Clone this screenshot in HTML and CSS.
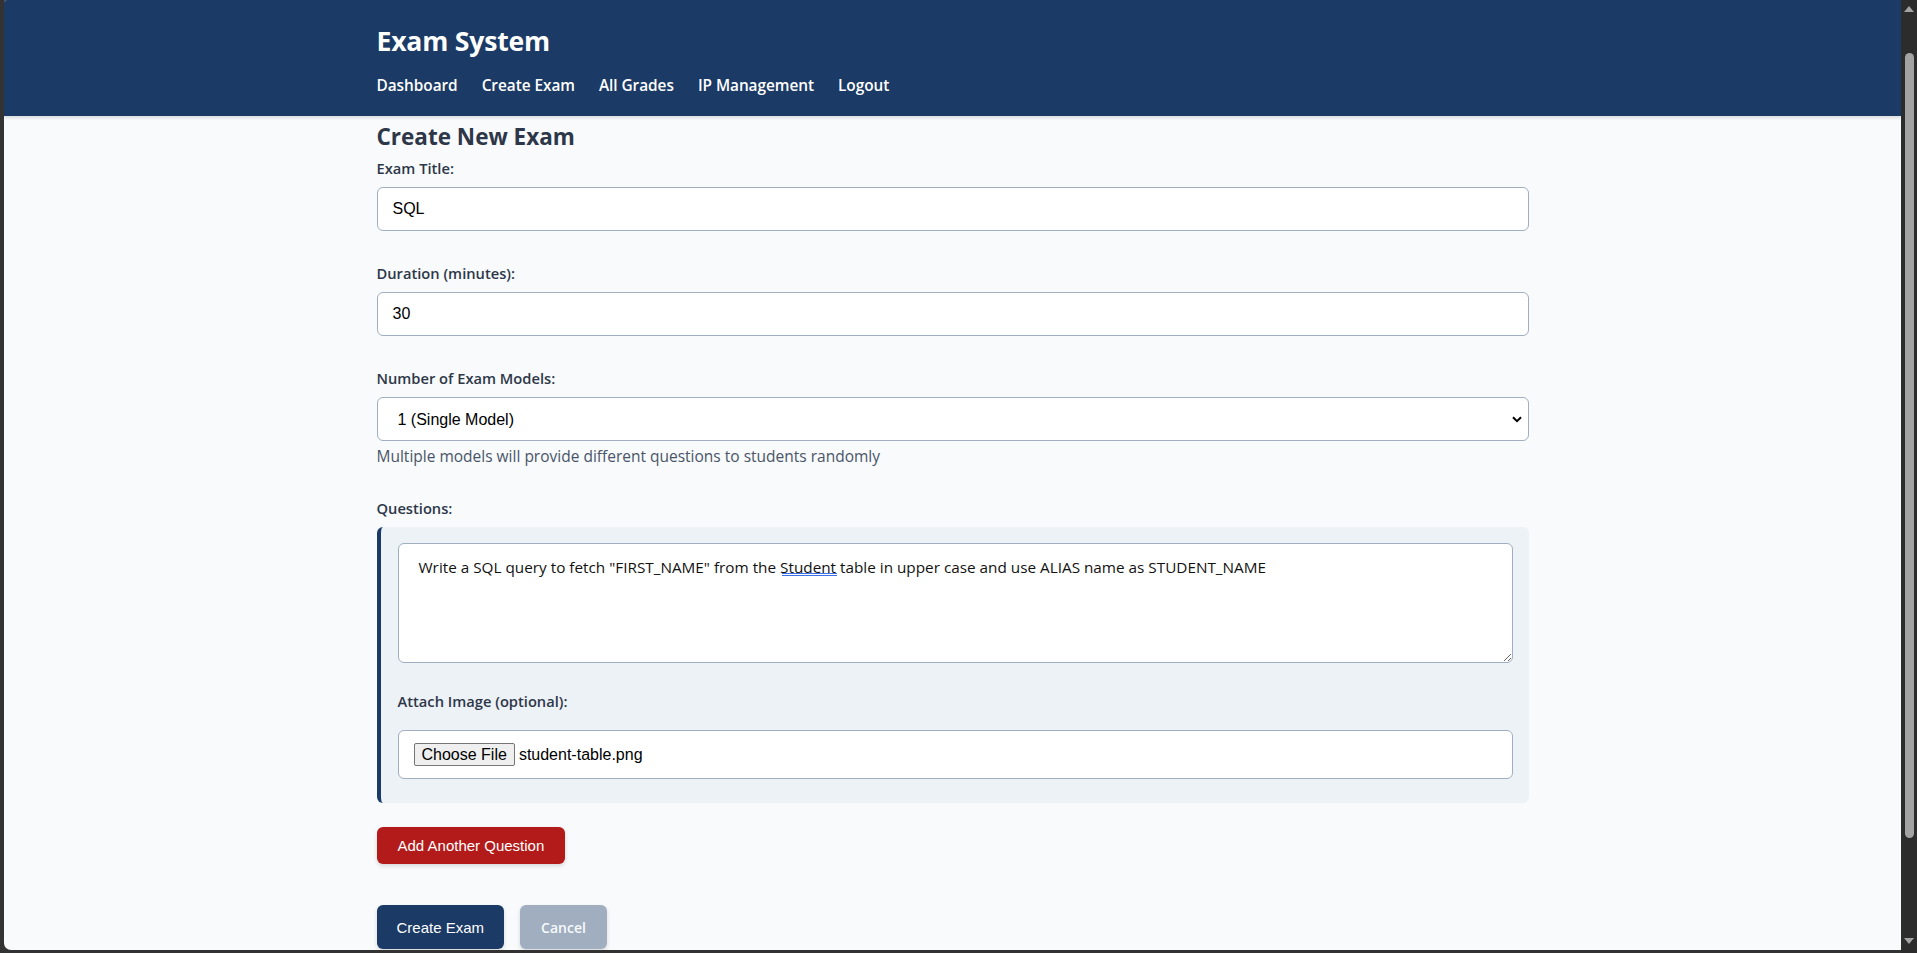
FILE: index.html
```html
<!DOCTYPE html>
<html lang="en">
<head>
<meta charset="utf-8">
<title>Create New Exam - Exam System</title>
<link rel="stylesheet" href="styles.css">
</head>
<body>
<div class="window">
  <div class="viewport">
    <header class="topbar">
      <div class="container">
        <h1 class="brand">Exam System</h1>
        <nav class="nav">
          <a href="#">Dashboard</a>
          <a href="#">Create Exam</a>
          <a href="#">All Grades</a>
          <a href="#">IP Management</a>
          <a href="#">Logout</a>
        </nav>
      </div>
    </header>
    <main class="container main">
      <h2 class="page-title">Create New Exam</h2>
      <form class="form">
        <div class="group">
          <label class="label">Exam Title:</label>
          <input class="field" type="text" value="SQL">
        </div>
        <div class="group">
          <label class="label">Duration (minutes):</label>
          <input class="field" type="text" value="30">
        </div>
        <div class="group">
          <label class="label">Number of Exam Models:</label>
          <select class="field select"><option>1 (Single Model)</option></select>
          <small class="help">Multiple models will provide different questions to students randomly</small>
        </div>
        <div class="group group-last">
          <label class="label">Questions:</label>
          <div class="question-card">
            <div class="textarea-wrap">
              <textarea class="field textarea" spellcheck="false">Write a SQL query to fetch "FIRST_NAME" from the Student table in upper case and use ALIAS name as STUDENT_NAME</textarea>
              <span class="spell-mark"></span>
            </div>
            <label class="label attach-label">Attach Image (optional):</label>
            <div class="field file-field">
              <span class="file-btn">Choose File</span>
              <span class="file-name">student-table.png</span>
            </div>
          </div>
        </div>
        <div class="add-row">
          <button type="button" class="btn btn-red">Add Another Question</button>
        </div>
        <div class="actions">
          <button type="button" class="btn btn-primary">Create Exam</button>
          <a href="#" class="btn btn-muted">Cancel</a>
        </div>
      </form>
    </main>
  </div>
  <div class="scrollbar">
    <span class="sb-up"></span>
    <span class="sb-thumb"></span>
    <span class="sb-down"></span>
  </div>
</div>
</body>
</html>
```
FILE: styles.css
```css
* { box-sizing: border-box; }

html, body {
  margin: 0;
  padding: 0;
}

body {
  height: 953px;
  overflow: hidden;
  background: #333333;
  font-family: "Open Sans", "Noto Sans", sans-serif;
  color: #2d3748;
}

.window {
  display: flex;
  align-items: flex-start;
  height: 953px;
}

.viewport {
  margin-left: 4px;
  width: 1897px;
  height: 950px;
  background: #f8fafc;
  border-bottom-left-radius: 7px;
  border-top-left-radius: 3px;
  overflow: hidden;
}

.container {
  max-width: 1200px;
  margin: 0 auto;
  padding: 0 24px;
}

/* Header */
.topbar {
  background: #1b3a65;
  color: #ffffff;
  padding: 24px 0 20px;
  box-shadow: 0 2px 3px rgba(0, 0, 0, 0.12);
  position: relative;
}

.brand {
  margin: 0;
  font-size: 26.6px;
  line-height: 34px;
  font-weight: 700;
  letter-spacing: -0.2px;
}

.nav {
  display: flex;
  gap: 24px;
  margin-top: 18px;
}

.nav a {
  color: #ffffff;
  text-decoration: none;
  font-size: 15.4px;
  line-height: 20px;
  font-weight: 600;
  letter-spacing: -0.05px;
}

/* Main */
.main {
  padding-top: 7px;
}

.page-title {
  margin: 0 0 7px;
  font-size: 22.5px;
  line-height: 28px;
  font-weight: 700;
  color: #2d3748;
}

.form { margin: 0; }

.group {
  margin-bottom: 32px;
}

.group-last {
  margin-bottom: 0;
}

.label {
  display: block;
  font-size: 14.7px;
  line-height: 20px;
  font-weight: 600;
  color: #2d3748;
  margin-bottom: 9px;
}

.field {
  display: block;
  width: 100%;
  height: 44px;
  padding: 0 15px;
  border: 1px solid #a0aec0;
  border-radius: 6px;
  background: #ffffff;
  font-family: "Liberation Sans", Arial, sans-serif;
  font-size: 16px;
  color: #000000;
  outline: none;
}

.select {
  appearance: none;
  -webkit-appearance: none;
  padding-left: 20px;
  background-image: url("data:image/svg+xml,%3Csvg xmlns='http://www.w3.org/2000/svg' width='10' height='7' viewBox='0 0 10 7'%3E%3Cpath d='M1 1.2l4 4 4-4' fill='none' stroke='%23000' stroke-width='2'/%3E%3C/svg%3E");
  background-repeat: no-repeat;
  background-position: right 6px center;
  background-size: 10px 7px;
}

.help {
  display: block;
  margin-top: 5px;
  font-size: 15.5px;
  line-height: 20px;
  color: #4a5568;
}

.question-card {
  background: #edf2f7;
  border-left: 4px solid #1b3a65;
  border-radius: 6px;
  padding: 16px 16px 16px 17px;
}

.textarea-wrap {
  position: relative;
  margin-bottom: 28px;
}

.textarea {
  height: 120px;
  padding: 13px 20px;
  font-family: "Open Sans", "Noto Sans", sans-serif;
  font-size: 15.3px;
  line-height: 20px;
  color: #111111;
  resize: vertical;
}

.spell-mark {
  position: absolute;
  left: 384px;
  top: 30px;
  width: 55px;
  height: 3px;
  border-top: 1px solid #3d6fe6;
  border-bottom: 1px solid #3d6fe6;
  pointer-events: none;
}

.attach-label {
  margin-bottom: 19px;
}

.file-field {
  display: flex;
  align-items: center;
  height: 49px;
  padding: 0 15px;
  margin-bottom: 8px;
}

.file-btn {
  display: inline-flex;
  align-items: center;
  height: 23px;
  padding: 0 7px;
  border: 1px solid #767676;
  border-radius: 2px;
  background: #efefef;
  color: #000000;
  font-size: 16px;
}

.file-name {
  margin-left: 4px;
  color: #000000;
  font-size: 16px;
}

/* Buttons */
.add-row {
  display: flex;
  margin-top: 24px;
}

.btn {
  display: inline-flex;
  align-items: center;
  justify-content: center;
  border: none;
  border-radius: 6px;
  color: #ffffff;
  font-family: "Liberation Sans", Arial, sans-serif;
  font-size: 15px;
  text-decoration: none;
  box-shadow: 0 2px 4px rgba(0, 0, 0, 0.14);
  cursor: pointer;
}

.btn-red {
  height: 37px;
  padding: 0 21px;
  background: #b31b1b;
}

.actions {
  display: flex;
  gap: 16px;
  margin-top: 41px;
}

.btn-primary {
  height: 44px;
  padding: 0 20px;
  background: #1b3a65;
}

.btn-muted {
  height: 44px;
  padding: 0 21px;
  background: #a0aec0;
  font-family: "Open Sans", "Noto Sans", sans-serif;
  font-size: 14px;
  font-weight: 600;
  color: #f7fafc;
}

/* Window scrollbar */
.scrollbar {
  width: 16px;
  height: 953px;
  background: #2c2c2c;
  display: flex;
  flex-direction: column;
  align-items: center;
}

.sb-up {
  margin-top: 6px;
  width: 0;
  height: 0;
  border-left: 5px solid transparent;
  border-right: 5px solid transparent;
  border-bottom: 6px solid #a3a3a3;
}

.sb-thumb {
  margin-top: 41px;
  width: 9px;
  height: 785px;
  border-radius: 5px;
  background: #a3a3a3;
}

.sb-down {
  margin-top: auto;
  margin-bottom: 9px;
  width: 0;
  height: 0;
  border-left: 5px solid transparent;
  border-right: 5px solid transparent;
  border-top: 6px solid #a3a3a3;
}
```
